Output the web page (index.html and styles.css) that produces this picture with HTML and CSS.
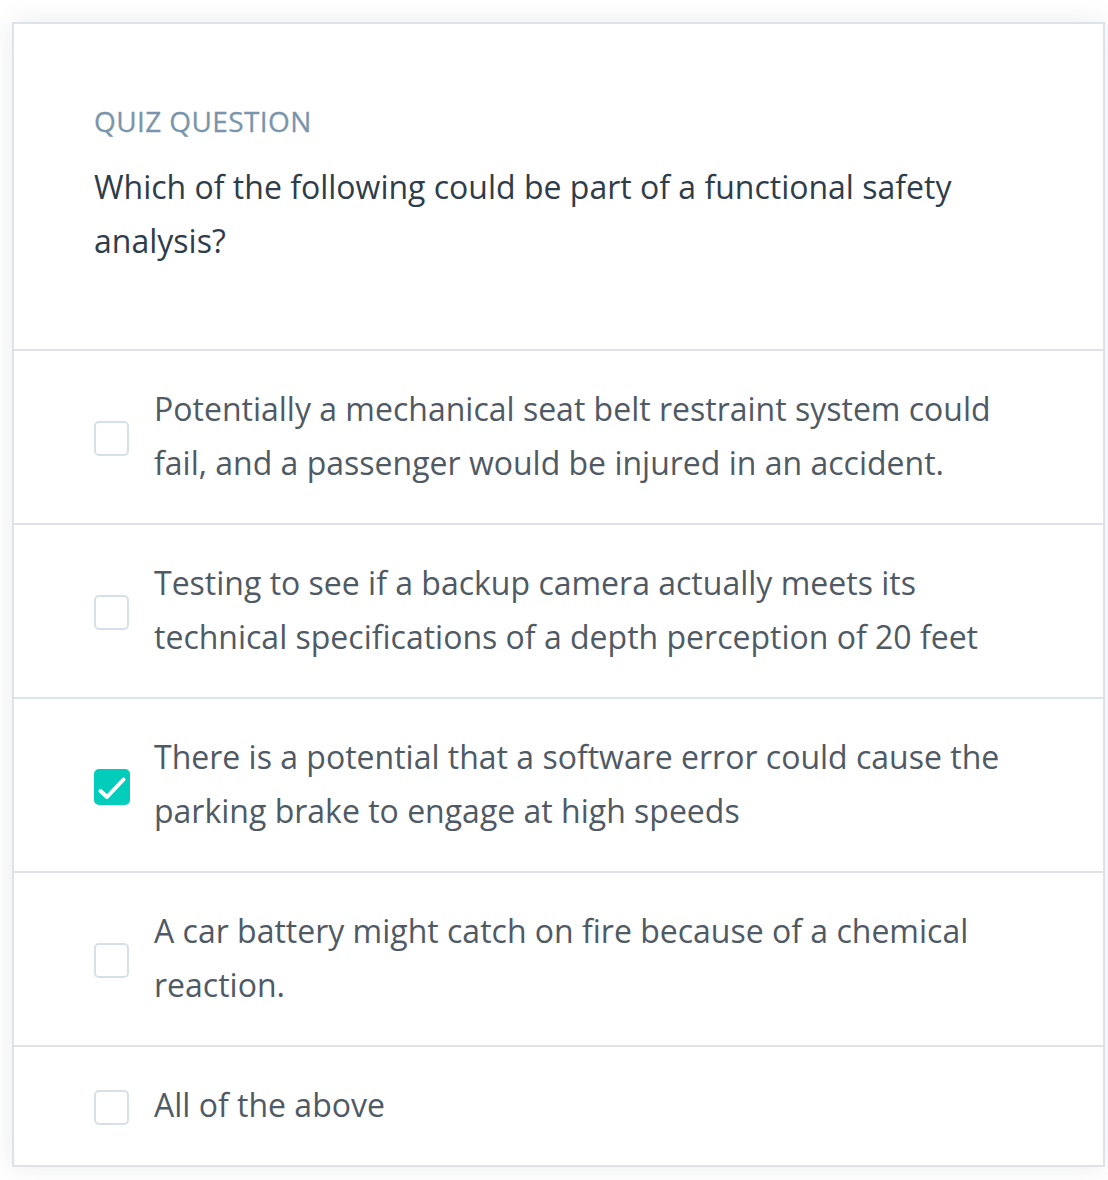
FILE: index.html
```html
<!DOCTYPE html>
<html lang="en">
<head>
<meta charset="utf-8">
<title>Quiz Question</title>
<link rel="stylesheet" href="styles.css">
</head>
<body>
<div class="card">
  <div class="header">
    <div class="label">QUIZ QUESTION</div>
    <div class="question">Which of the following could be part of a functional safety analysis?</div>
  </div>
  <ul class="options">
    <li class="option">
      <span class="box"></span>
      <span class="text">Potentially a mechanical seat belt restraint system could fail, and a passenger would be injured in an accident.</span>
    </li>
    <li class="option">
      <span class="box"></span>
      <span class="text">Testing to see if a backup camera actually meets its technical specifications of a depth perception of 20 feet</span>
    </li>
    <li class="option">
      <span class="box checked"><svg viewBox="0 0 36 36" width="36" height="36"><path d="M6.5 22 L13 28 L29.5 10.5" fill="none" stroke="#fff" stroke-width="4" stroke-linecap="round" stroke-linejoin="round"/></svg></span>
      <span class="text">There is a potential that a software error could cause the parking brake to engage at high speeds</span>
    </li>
    <li class="option">
      <span class="box"></span>
      <span class="text">A car battery might catch on fire because of a chemical reaction.</span>
    </li>
    <li class="option">
      <span class="box"></span>
      <span class="text">All of the above</span>
    </li>
  </ul>
</div>
</body>
</html>
```

FILE: styles.css
```css
html, body {
  margin: 0;
  padding: 0;
  background: #ffffff;
}
body {
  padding: 22px 3px 14px 12px;
  font-family: "Open Sans", "Noto Sans", sans-serif;
}
.card {
  background: #fff;
  border: 2px solid #dde3e9;
  box-shadow: 0 0 24px rgba(46, 61, 73, 0.10);
}
.header {
  padding: 76px 80px 81px 80px;
}
.label {
  font-size: 28px;
  line-height: 42px;
  font-weight: 400;
  color: #7a95ab;
  letter-spacing: 0.4px;
  -webkit-text-stroke: 0.3px #7a95ab;
}
.question {
  margin-top: 18px;
  font-size: 32px;
  line-height: 54px;
  color: #2e3d49;
}
.options {
  list-style: none;
  margin: 0;
  padding: 0;
}
.option {
  display: flex;
  align-items: center;
  border-top: 2px solid #dde3e9;
  padding: 31px 60px 33px 80px;
}
.box {
  flex: 0 0 auto;
  width: 31px;
  height: 31px;
  border: 2px solid #d8e0e7;
  border-radius: 5px;
  margin-top: 5px;
  margin-right: 25px;
  background: #fff;
  position: relative;
}
.box.checked {
  width: 36px;
  height: 36px;
  border: none;
  margin-right: 24px;
  background: #02ccba;
}
.box.checked svg {
  position: absolute;
  left: 0;
  top: 0;
  width: 36px;
  height: 36px;
}
.text {
  font-size: 32px;
  line-height: 54px;
  color: #4f5a64;
}
```
